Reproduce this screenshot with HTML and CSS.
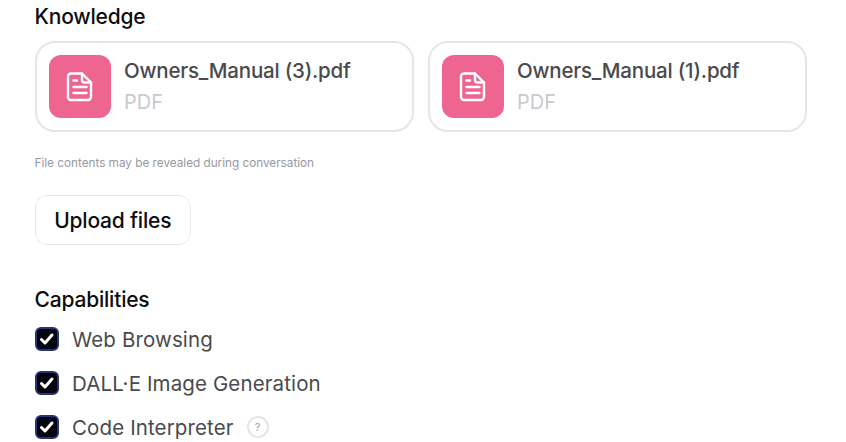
FILE: index.html
```html
<!DOCTYPE html>
<html lang="en">
<head>
<meta charset="utf-8">
<title>Knowledge</title>
<link rel="stylesheet" href="styles.css">
</head>
<body>
<main class="page">
  <h2 class="heading">Knowledge</h2>
  <div class="files">
    <div class="file">
      <div class="file-icon">
        <svg width="28" height="32" viewBox="0 0 28 32" fill="none" stroke="#fff" stroke-width="2.4" stroke-linecap="round" stroke-linejoin="round"><path d="M5 2.500h11l9 9V26a3 3 0 0 1-3 3H5a3 3 0 0 1-3-3V5.500a3 3 0 0 1 3-3z"/><path d="M16 2.500V9a2.500 2.500 0 0 0 2.500 2.500H25"/><path d="M7.500 9.500h3.500M7.500 16h13M7.500 22h13"/></svg>
      </div>
      <div class="file-text">
        <div class="file-name">Owners_Manual (3).pdf</div>
        <div class="file-type">PDF</div>
      </div>
    </div>
    <div class="file">
      <div class="file-icon">
        <svg width="28" height="32" viewBox="0 0 28 32" fill="none" stroke="#fff" stroke-width="2.4" stroke-linecap="round" stroke-linejoin="round"><path d="M5 2.500h11l9 9V26a3 3 0 0 1-3 3H5a3 3 0 0 1-3-3V5.500a3 3 0 0 1 3-3z"/><path d="M16 2.500V9a2.500 2.500 0 0 0 2.500 2.500H25"/><path d="M7.500 9.500h3.500M7.500 16h13M7.500 22h13"/></svg>
      </div>
      <div class="file-text">
        <div class="file-name">Owners_Manual (1).pdf</div>
        <div class="file-type">PDF</div>
      </div>
    </div>
  </div>
  <p class="note">File contents may be revealed during conversation</p>
  <button class="upload" type="button">Upload files</button>
  <h2 class="heading caps-heading">Capabilities</h2>
  <ul class="caps">
    <li class="cap"><span class="check"><svg width="16" height="14" viewBox="0 0 16 14" fill="none" stroke="#fff" stroke-width="3" stroke-linecap="round" stroke-linejoin="round"><path d="M2.500 7.500l3.500 3.500 7-8"/></svg></span>Web Browsing</li>
    <li class="cap"><span class="check"><svg width="16" height="14" viewBox="0 0 16 14" fill="none" stroke="#fff" stroke-width="3" stroke-linecap="round" stroke-linejoin="round"><path d="M2.500 7.500l3.500 3.500 7-8"/></svg></span>DALL·E Image Generation</li>
    <li class="cap"><span class="check"><svg width="16" height="14" viewBox="0 0 16 14" fill="none" stroke="#fff" stroke-width="3" stroke-linecap="round" stroke-linejoin="round"><path d="M2.500 7.500l3.500 3.500 7-8"/></svg></span>Code Interpreter<span class="help">?</span></li>
  </ul>
</main>
</body>
</html>
```
FILE: styles.css
```css
* { box-sizing: border-box; }
html, body { margin: 0; height: 100%; overflow: hidden; background: #fff; }
body { font-family: Inter, "Liberation Sans", sans-serif; color: #0d0d0d; }
.page { padding: 5px 0 0 34.5px; width: 846px; }
.heading { margin: 0; font-size: 21px; line-height: 24px; font-weight: 500; letter-spacing: -0.2px; }
.files { display: flex; gap: 13.5px; margin-top: 12px; }
.file { width: 379.5px; height: 91px; border: 2px solid #e6e6e8; border-radius: 20px; padding: 12px; display: flex; gap: 13px; align-items: center; }
.file-icon { width: 62.5px; height: 63px; border-radius: 12px; background: #ef6591; display: flex; align-items: center; justify-content: center; flex: none; }
.file-text { display: flex; flex-direction: column; gap: 3px; }
.file-name { font-size: 20.5px; line-height: 28px; font-weight: 500; color: #4a4a4e; letter-spacing: -0.2px; }
.file-type { font-size: 20px; line-height: 28px; color: #c9c9ce; }
.note { margin: 23px 0 0; font-size: 11.8px; line-height: 16px; color: #98989f; letter-spacing: -0.03px; }
.upload { display: block; margin-top: 24px; width: 156.5px; height: 50px; padding: 0; border: 1.5px solid #e8e8ea; border-radius: 12px; background: #fff; font: 500 21px Inter, "Liberation Sans", sans-serif; letter-spacing: -0.2px; color: #0d0d0d; }
.caps-heading { margin-top: 43px; }
.caps { list-style: none; margin: 12px 0 0; padding: 0; display: flex; flex-direction: column; gap: 14px; }
.cap { display: flex; align-items: center; height: 30px; font-size: 20.5px; color: #4a4a4e; letter-spacing: 0.12px; }
.check { width: 24px; height: 24px; flex: none; margin-right: 13.5px; border-radius: 6px; background: #05050f; border: 2px solid #27337a; display: flex; align-items: center; justify-content: center; }
.help { width: 22px; height: 22px; margin-left: 13px; border: 2px solid #e5e5e7; border-radius: 50%; font-size: 11px; line-height: 18px; text-align: center; color: #98989f; }
```
